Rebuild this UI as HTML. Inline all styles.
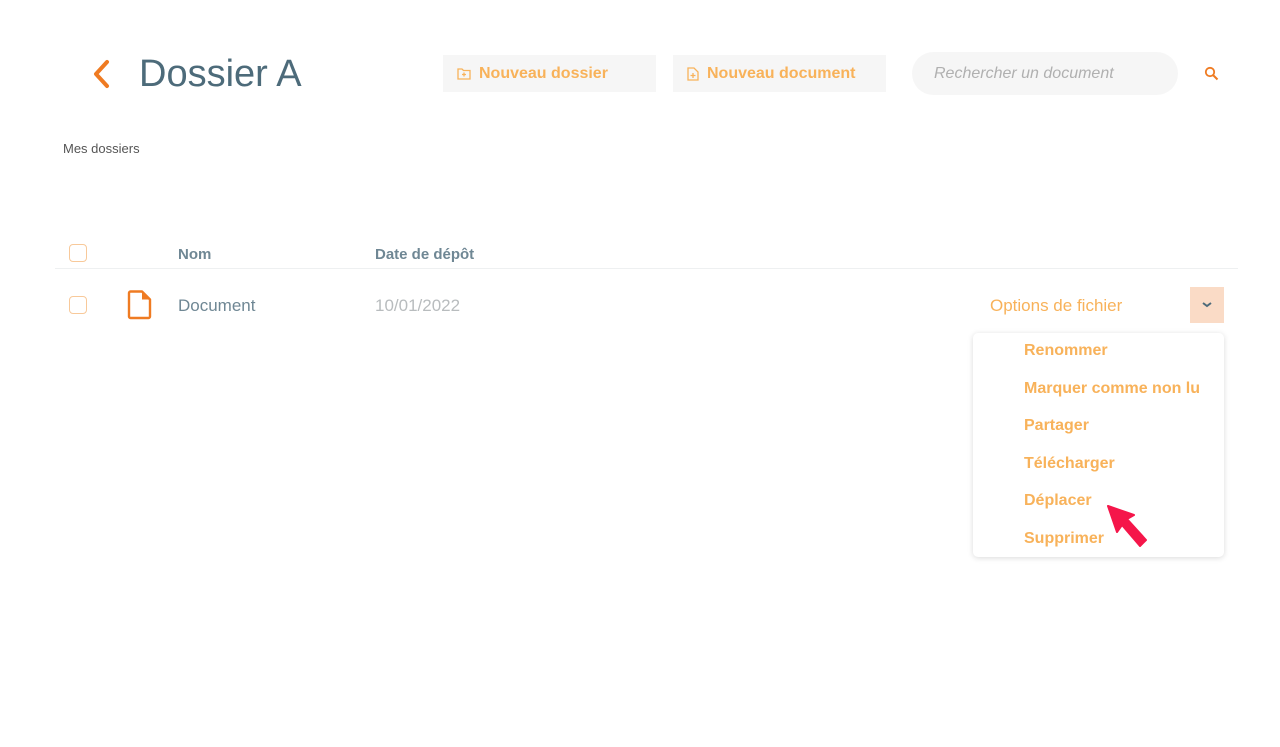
<!DOCTYPE html>
<html><head><meta charset="utf-8"><style>
*{margin:0;padding:0;box-sizing:border-box}
body{width:1280px;height:747px;background:#fff;font-family:"Liberation Sans",sans-serif;position:relative;overflow:hidden}
.a{position:absolute}
.btn{background:#f6f6f6;color:#f8b25a;font-size:16px;font-weight:bold;height:37px;top:55px;width:213px;display:flex;align-items:center;padding-left:14px;gap:8px}
.cb{width:18px;height:18px;border:1px solid #f8c99a;border-radius:4px}
.mi{left:1024px;color:#f8b25a;font-size:16px;font-weight:bold}
</style></head><body>
<svg class="a" style="left:90px;top:58px" width="22" height="32" viewBox="0 0 22 32"><path d="M17 4 L6 16 L17 28" fill="none" stroke="#ef7b22" stroke-width="4" stroke-linecap="round" stroke-linejoin="round"/></svg>
<div class="a" style="left:139px;top:53px;font-size:38px;color:#4d6b7a">Dossier A</div>
<div class="a btn" style="left:443px"><svg width="14" height="12" viewBox="0 0 14 12"><path d="M1 1h4l1.5 1.5H13v8.5H1z" fill="none" stroke="#f8b25a" stroke-width="1.3"/><path d="M7 4.5v4M5 6.5h4" stroke="#f8b25a" stroke-width="1.3"/></svg>Nouveau dossier</div>
<div class="a btn" style="left:673px"><svg width="12" height="14" viewBox="0 0 12 14"><path d="M1 1h6l4 4v8H1z" fill="none" stroke="#f8b25a" stroke-width="1.3"/><path d="M6 6v5M3.5 8.5h5" stroke="#f8b25a" stroke-width="1.3"/></svg>Nouveau document</div>
<div class="a" style="left:912px;top:52px;width:266px;height:43px;border-radius:22px;background:#f6f6f6;color:#b0b0b0;font-style:italic;font-size:16px;line-height:44px;padding-left:22px">Rechercher un document</div>
<svg class="a" style="left:1204px;top:66px" width="15" height="15" viewBox="0 0 15 15"><circle cx="6" cy="6" r="4.2" fill="none" stroke="#ef7b22" stroke-width="1.8"/><path d="M9 9l4.5 4.5" stroke="#ef7b22" stroke-width="2"/></svg>
<div class="a" style="left:63px;top:141px;font-size:13px;color:#555">Mes dossiers</div>
<div class="a cb" style="left:69px;top:244px"></div>
<div class="a" style="left:178px;top:246px;font-size:15px;font-weight:bold;color:#6f8794">Nom</div>
<div class="a" style="left:375px;top:246px;font-size:15px;font-weight:bold;color:#6f8794">Date de dépôt</div>
<div class="a" style="left:55px;top:268px;width:1183px;height:1px;background:#eef0f1"></div>
<div class="a cb" style="left:69px;top:296px"></div>
<svg class="a" style="left:127px;top:290px" width="25" height="30" viewBox="0 0 25 30"><path d="M2 3a1.5 1.5 0 0 1 1.5-1.5H15L23 9.5V26.5A1.5 1.5 0 0 1 21.5 28H3.5A1.5 1.5 0 0 1 2 26.5z" fill="none" stroke="#ef7b22" stroke-width="2.4" stroke-linejoin="round"/><path d="M15 1.5V9.5H23z" fill="#ef7b22"/></svg>
<div class="a" style="left:178px;top:296px;font-size:17px;color:#6f8794">Document</div>
<div class="a" style="left:375px;top:296px;font-size:17px;color:#b8bcbe">10/01/2022</div>
<div class="a" style="left:990px;top:296px;font-size:17px;color:#f8b25a">Options de fichier</div>
<div class="a" style="left:1190px;top:287px;width:34px;height:36px;background:#fadbc6"></div>
<svg class="a" style="left:1202px;top:302px" width="10" height="6" viewBox="0 0 10 6"><path d="M1 1l4 3 4-3" fill="none" stroke="#4d6b7a" stroke-width="2"/></svg>
<div class="a" style="left:973px;top:333px;width:251px;height:224px;background:#fff;border-radius:5px;box-shadow:0 1px 6px rgba(0,0,0,.15)"></div>
<div class="a mi" style="top:342px">Renommer</div>
<div class="a mi" style="top:380px">Marquer comme non lu</div>
<div class="a mi" style="top:417px">Partager</div>
<div class="a mi" style="top:455px">Télécharger</div>
<div class="a mi" style="top:492px">Déplacer</div>
<div class="a mi" style="top:530px">Supprimer</div>
<svg class="a" style="left:1104px;top:503px" width="46" height="46" viewBox="0 0 46 46"><path d="M4 3 L30 12 L23 16 L42 37 L36 43 L18 22 L13 29 Z" fill="#f5164a" stroke="#f5164a" stroke-width="2" stroke-linejoin="round"/></svg>
</body></html>
